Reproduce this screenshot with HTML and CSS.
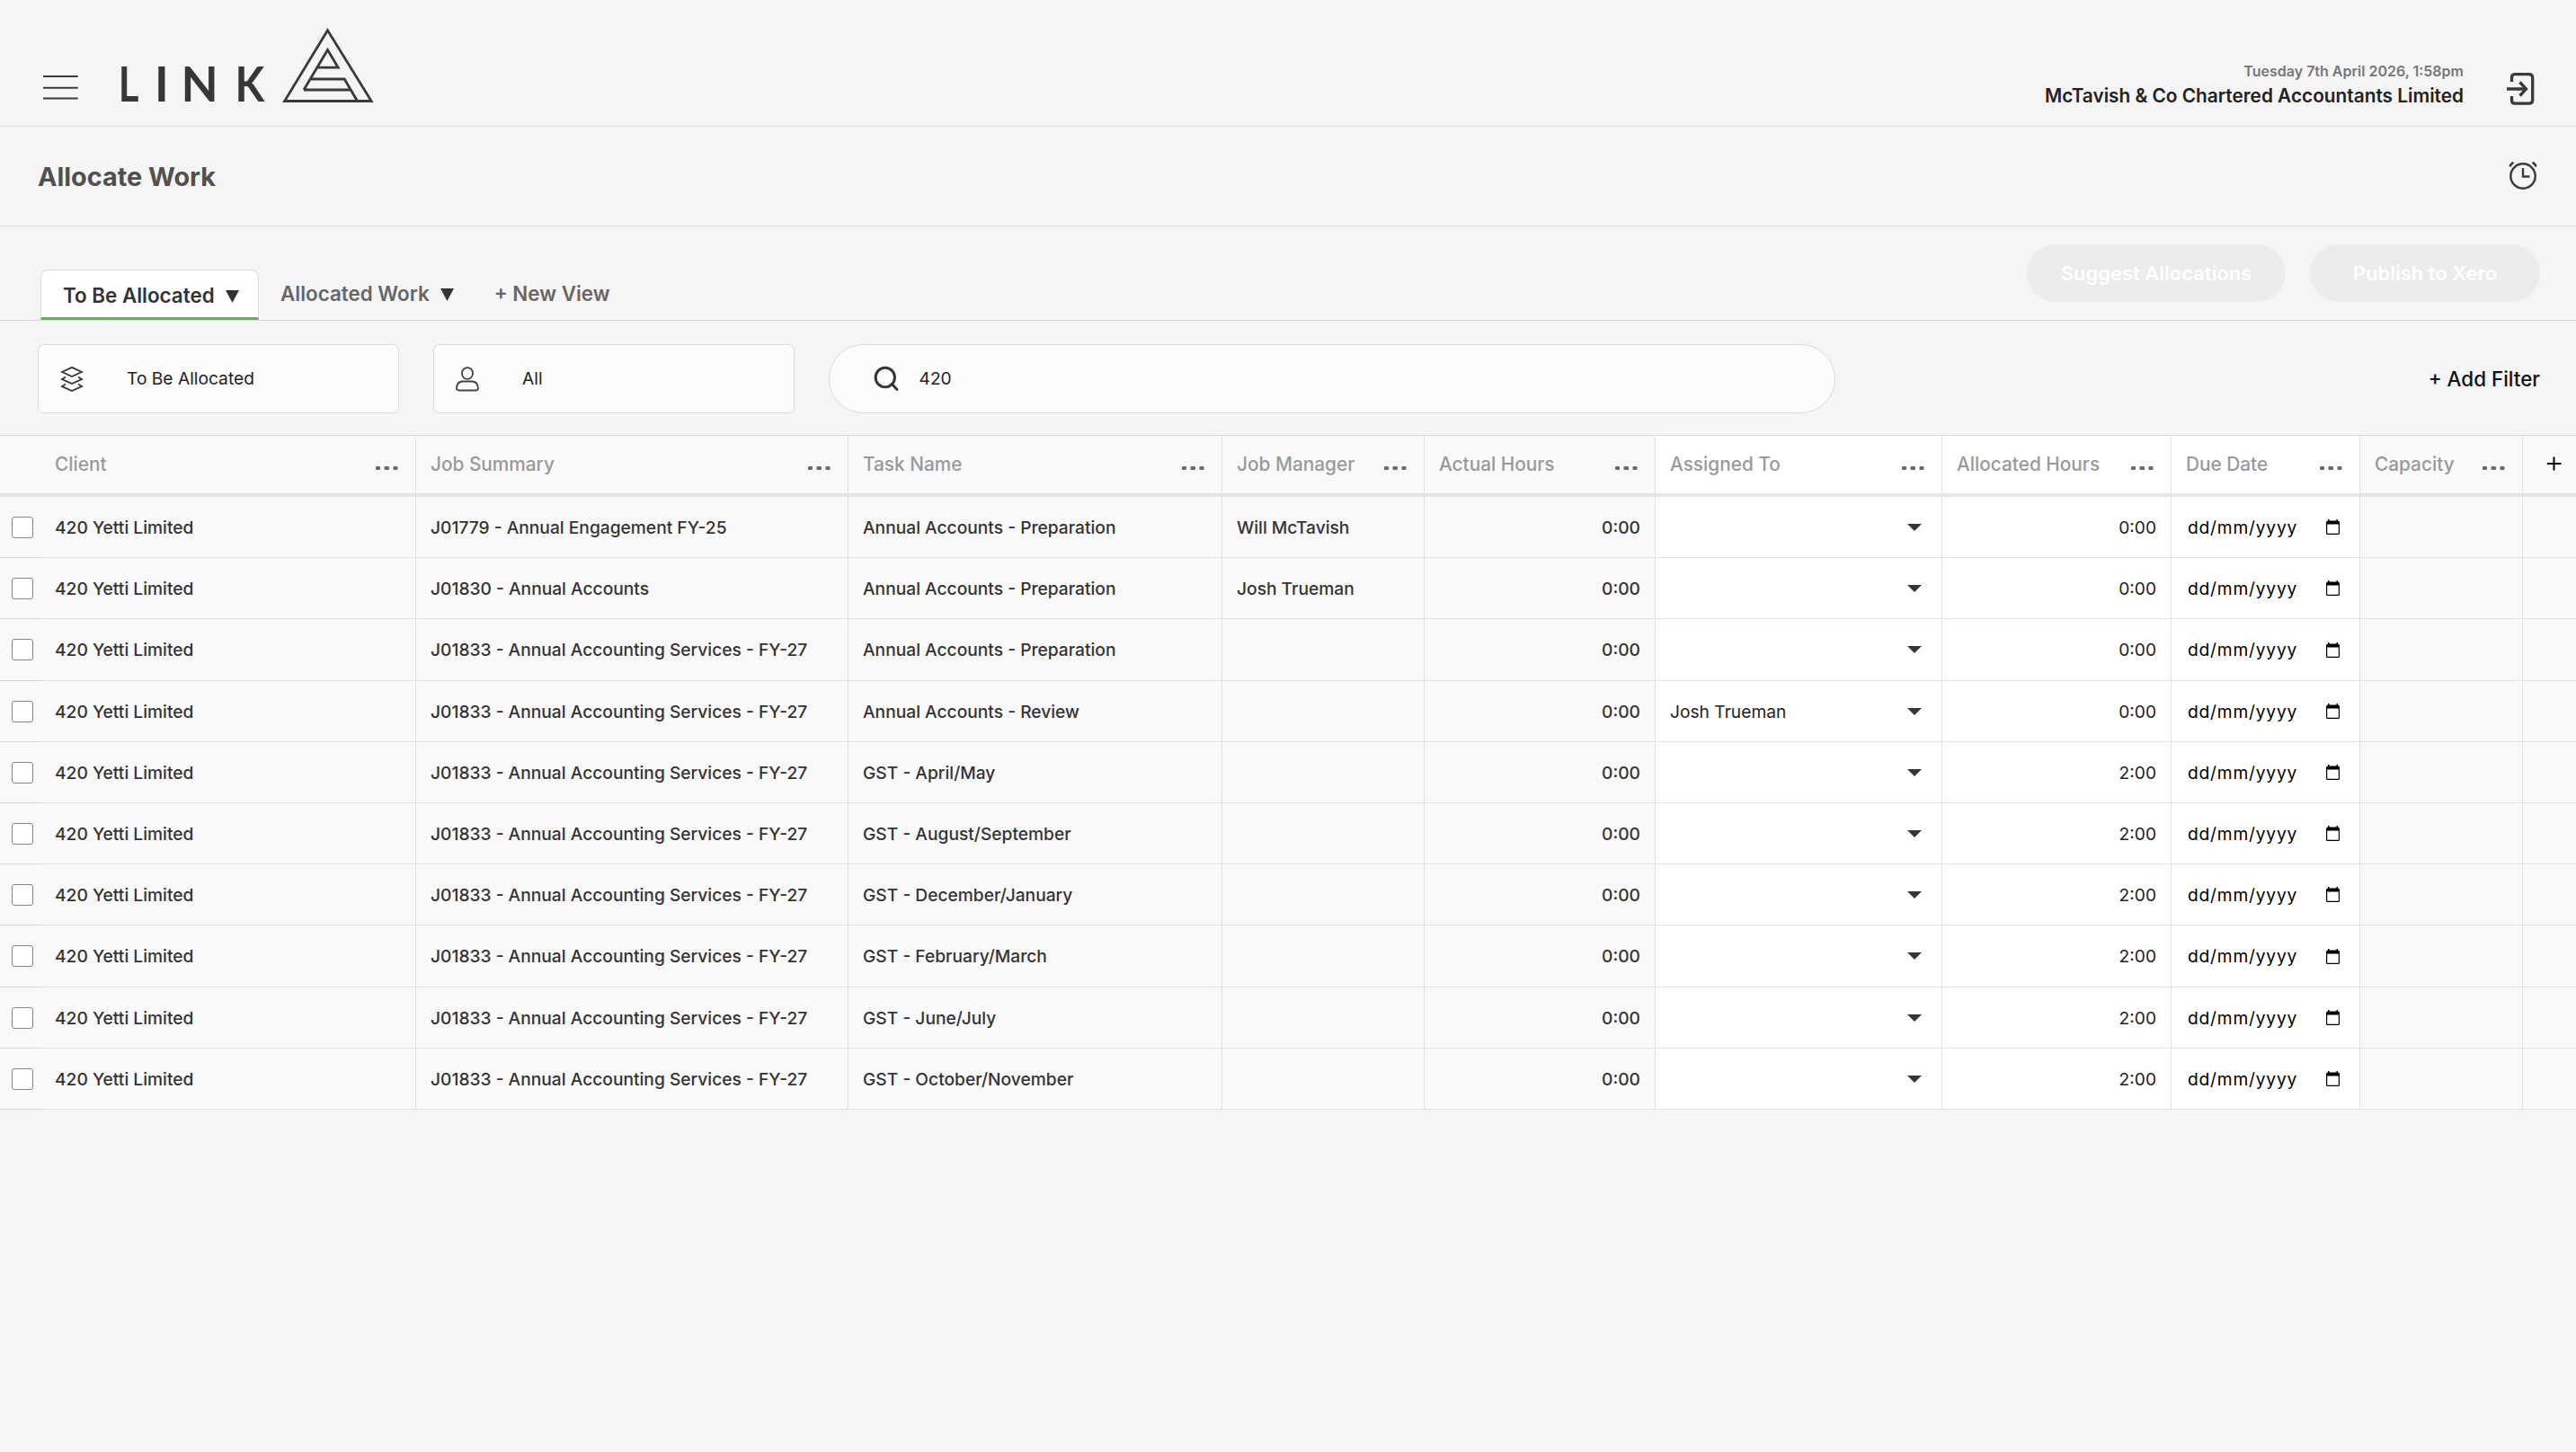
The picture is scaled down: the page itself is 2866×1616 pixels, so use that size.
FILE: index.html
```html
<!DOCTYPE html>
<html lang="en">
<head>
<meta charset="utf-8">
<title>Allocate Work</title>
<link rel="stylesheet" href="styles.css">
</head>
<body>
<header class="topbar">
  <div class="brand">
    <svg class="menu" width="40" height="30" viewBox="0 0 40 30"><path d="M0 2H38.700M0 14.800H38.700M0 26.500H38.700" stroke="#3a3a3a" stroke-width="2"/></svg>
    <svg class="logo" width="290" height="108" viewBox="-6 0 290 108">
      <g class="wordmark"><text transform="translate(-1.300 84) scale(0.820 1)">L</text><text x="39" y="84">I</text><text transform="translate(68.500 84) scale(1.010 1)">N</text><text transform="translate(128.500 84) scale(0.900 1)">K</text></g>
      <g fill="none" stroke="#3a3a3b" stroke-width="2.800">
        <path d="M231.500 4.700L280.200 83.500H183.600Z"/><path d="M205 71L231.500 26.500L243.200 46.200H220.500M213 59H250.200L264.300 83M205 71H257"/>
      </g>
    </svg>
  </div>
  <div class="account">
    <div class="who"><div class="date">Tuesday 7th April 2026, 1:58pm</div><div class="company">McTavish &amp; Co Chartered Accountants Limited</div></div>
    <svg class="logout" width="32" height="38" viewBox="0 0 32 38" fill="none" stroke="#3a3a3b" stroke-width="3.300"><path d="M5.500 11V6.500Q5.500 2.700 9 2.700H24.500Q28.700 2.700 28.700 6.500V31.500Q28.700 35.200 24.500 35.200H9Q5.500 35.200 5.500 31.500V27M0 19H21M14.500 11.500L21.500 19L14.500 26.500"/></svg>
  </div>
</header>
<section class="titlebar">
  <h1>Allocate Work</h1>
  <svg class="alarm" width="34" height="34" viewBox="0 0 34 34" fill="none" stroke="#3a3a3b" stroke-width="2.400"><circle cx="17" cy="18" r="13.700"/><path d="M17 9V18.500H24.500M2.500 7.500Q3.500 4 6.500 2.800M27.500 2.800Q30.500 4 31.500 7.500"/></svg>
</section>
<nav class="tabbar">
  <div class="tabs">
    <div class="tab active">To Be Allocated<svg width="15" height="14" viewBox="0 0 15 14"><path d="M0 0H15L7.500 14Z" fill="#333"/></svg></div>
    <div class="tab">Allocated Work<svg width="15" height="14" viewBox="0 0 15 14"><path d="M0 0H15L7.500 14Z" fill="#333"/></svg></div>
    <div class="tab">+ New View</div>
  </div>
  <div class="actions"><button class="suggest">Suggest Allocations</button><button class="publish">Publish to Xero</button></div>
</nav>
<section class="filters">
  <div class="select"><svg width="26" height="28" viewBox="0 0 26 28" fill="none" stroke="#333" stroke-width="1.800"><path d="M13 0.900L24 6L13 11L2 6ZM6 11.500L2 14L13 19L24 14L20 11.500M6 19.500L2 22L13 27L24 22L20 19.500"/></svg><span>To Be Allocated</span></div>
  <div class="select"><svg width="26" height="28" viewBox="0 0 26 28" fill="none" stroke="#444" stroke-width="1.800"><ellipse cx="13" cy="7.500" rx="6" ry="6.400"/><path d="M4 26.500Q1 26.500 1 24Q1.500 16.500 8 16.500H18Q24.500 16.500 25 24Q25 26.500 22 26.500Z"/></svg><span>All</span></div>
  <div class="search"><svg width="29" height="29" viewBox="0 0 29 29" fill="none" stroke="#363637" stroke-width="3"><circle cx="12.800" cy="13" r="10.700"/><path d="M20.500 20.500L26 26.500" stroke-linecap="round"/></svg><span>420</span></div>
  <div class="add">+ Add Filter</div>
</section>
<div class="grid" id="grid"></div>
<script src="grid.js"></script>
</body>
</html>
```
FILE: styles.css
```css
* { box-sizing: border-box; }
body { margin: 0; background: #f5f5f5; color: #333; font-family: Inter, "Liberation Sans", sans-serif; font-weight: 500; }
svg { display: block; flex: none; }
.topbar { height: 141px; border-bottom: 1px solid #e0e0e0; display: flex; justify-content: space-between; }
.brand { display: flex; padding: 29px 0 0 48px; align-items: flex-start; }
.menu { margin-top: 54px; }
.logo { margin-left: 39px; }
.wordmark { font: 700 53px Lato, sans-serif; fill: #363637; }
.account { display: flex; padding: 68px 45px 0 0; }
.who { text-align: right; margin-right: 48px; }
.date { font-size: 16px; line-height: 22px; font-weight: 600; color: #777; white-space: nowrap; }
.company { font-size: 20.800px; line-height: 26px; margin-top: 4px; font-weight: 600; color: #222; white-space: nowrap; }
.logout { margin-top: 12px; }
.titlebar { height: 111px; border-bottom: 1px solid #e0e0e0; display: flex; align-items: center; justify-content: space-between; padding: 0 42px; }
.alarm { margin-bottom: 2px; }
h1 { margin: 2px 0 0; font-size: 28.800px; line-height: 36px; font-weight: 700; color: #505050; }
.tabbar { height: 105px; border-bottom: 1px solid #d8d8d8; display: flex; justify-content: space-between; padding: 0 40px 0 45px; }
.tabs { display: flex; align-items: flex-end; }
.tab { height: 56px; display: flex; align-items: center; font-size: 22.400px; font-weight: 600; color: #666; padding: 0 0 3px 24px; white-space: nowrap; }
.tab svg { margin: 3px 0 0 12px; }
.tab:nth-child(3) { padding-left: 45px; }
.tab.active { width: 243px; padding-bottom: 0; padding-top: 2px; color: #333; background: #fff; border: 1px solid #dcdcdc; border-bottom: 3px solid #6aae5f; border-radius: 8px 8px 0 0; }
.actions { display: flex; gap: 27px; padding-top: 20px; }
button { height: 64px; border: 0; border-radius: 32px; background: #ececec; color: #fff; font: 600 22px Inter, sans-serif; padding: 0; }
.suggest { width: 288px; }
.publish { width: 256px; }
.filters { height: 127px; display: flex; align-items: flex-start; padding: 26px 40px 0 42px; font-size: 19.200px; font-weight: 400; color: #222; }
.select { width: 402px; height: 77px; margin-right: 38px; padding-left: 24px; display: flex; align-items: center; background: #fcfcfc; border: 1px solid #dadada; border-radius: 7px; }
.select span { margin-left: 48px; padding-bottom: 2px; }
.search { width: 1120px; height: 77px; display: flex; align-items: center; padding-left: 49px; background: #fcfcfc; border: 1px solid #dadada; border-radius: 39px; }
.search span { margin-left: 21.500px; padding-bottom: 2px; }
.add { margin-left: auto; line-height: 78px; font-size: 22.400px; font-weight: 500; color: #111; }
.grid { border-top: 1px solid #d8d8d8; }
.row { display: grid; grid-template-columns: 45px 418px 481px 416px 225px 257px 319px 255px 210px 181px 59px; height: 68px; font-size: 19.200px; }
.row.tall { height: 69px; }
.cell { display: flex; align-items: center; justify-content: space-between; padding: 0 16px; background: #f9f9f9; border-right: 1px solid #e2e2e2; border-bottom: 1px solid #e2e2e2; white-space: nowrap; }
.cell:last-child { border-right: 0; }
.cell.edit { background: #fff; color: #222; font-weight: 400; }
.head { font-size: 20.800px; }
.head .cell { border-bottom: 4px solid #e5e5e5; padding: 0 19.500px 2px 16px; font-weight: 500; color: #999; }
.head .cell:first-child { grid-column: span 2; padding-left: 61px; }
.head .cell:last-child { justify-content: flex-start; padding-left: 27px; }
.head .dots { margin-top: 10px; }
.body .pick { padding: 0 0 0 13px; border-right: 0; border-bottom-color: #d6d6d6; }
.check { width: 24px; height: 24px; border: 1px solid #858585; border-radius: 3px; background: #fff; }
.body .num { justify-content: flex-end; }
.body .arrow { padding-right: 22px; }
.body .date-cell { padding: 0 22px 0 18px; color: #000; }
.mask { letter-spacing: 0.800px; }
```
FILE: grid.js
```js
const columns = ['Client', 'Job Summary', 'Task Name', 'Job Manager', 'Actual Hours', 'Assigned To', 'Allocated Hours', 'Due Date', 'Capacity'];
const annual = 'J01833 - Annual Accounting Services - FY-27';
const rows = [
  ['J01779 - Annual Engagement FY-25', 'Annual Accounts - Preparation', 'Will McTavish', '', '0:00'],
  ['J01830 - Annual Accounts', 'Annual Accounts - Preparation', 'Josh Trueman', '', '0:00'],
  [annual, 'Annual Accounts - Preparation', '', '', '0:00'],
  [annual, 'Annual Accounts - Review', '', 'Josh Trueman', '0:00'],
  [annual, 'GST - April/May', '', '', '2:00'],
  [annual, 'GST - August/September', '', '', '2:00'],
  [annual, 'GST - December/January', '', '', '2:00'],
  [annual, 'GST - February/March', '', '', '2:00'],
  [annual, 'GST - June/July', '', '', '2:00'],
  [annual, 'GST - October/November', '', '', '2:00']
];
const dots = '<svg class="dots" width="25" height="5" viewBox="0 0 25 5" fill="#666b73"><rect width="5" height="4" rx="1"/><rect x="9.500" width="5.500" height="4" rx="1"/><rect x="19.500" width="5" height="4" rx="1"/></svg>';
const caret = '<svg width="16" height="8" viewBox="0 0 16 8"><path d="M0 0H16L8 8Z" fill="#363637"/></svg>';
const calendar = '<svg width="15" height="17" viewBox="0 0 15 17"><path d="M2 0H3.500V1.500H11.500V0H13V1.500Q15 1.500 15 3.500V15.500Q15 17 13.500 17H1.500Q0 17 0 15.500V3.500Q0 1.500 2 1.500ZM1.200 5.500V15.800H13.800V5.500Z" fill-rule="evenodd"/></svg>';
const cell = (cls, html) => `<div class="cell ${cls}">${html}</div>`;
const head = columns.map((c, i) => cell(i > 4 && i < 8 ? 'edit' : '', `<span>${c}</span>${dots}`)).join('') +
  cell('', '<svg width="16" height="16" viewBox="0 0 16 16"><path d="M0 8H15.500M7.500 0.500V15.500" stroke="#000" stroke-width="2"/></svg>');
const body = rows.map(([job, task, manager, assigned, hours], i) =>
  `<div class="row body${i === 2 || i === 7 ? ' tall' : ''}">` +
  cell('pick', '<i class="check"></i>') + cell('', '420 Yetti Limited') + cell('', job) + cell('', task) + cell('', manager) + cell('num', '0:00') +
  cell('edit arrow', `<span>${assigned}</span>${caret}`) + cell('edit num', hours) +
  cell('edit date-cell', `<span class="mask">dd/mm/yyyy</span>${calendar}`) + cell('', '') + cell('', '') + '</div>').join('');
document.getElementById('grid').innerHTML = `<div class="row head">${head}</div>${body}`;
```
